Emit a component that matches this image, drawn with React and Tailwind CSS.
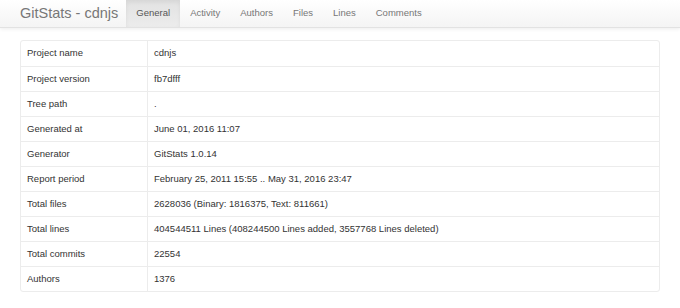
const tabs = ["General", "Activity", "Authors", "Files", "Lines", "Comments"];

const rows = [
  ["Project name", "cdnjs"],
  ["Project version", "fb7dfff"],
  ["Tree path", "."],
  ["Generated at", "June 01, 2016 11:07"],
  ["Generator", "GitStats 1.0.14"],
  ["Report period", "February 25, 2011 15:55 .. May 31, 2016 23:47"],
  ["Total files", "2628036 (Binary: 1816375, Text: 811661)"],
  ["Total lines", "404544511 Lines (408244500 Lines added, 3557768 Lines deleted)"],
  ["Total commits", "22554"],
  ["Authors", "1376"],
];

export default function App() {
  return (
    <div className="w-[680px] h-[308px] bg-white font-['Liberation_Sans',Arial,sans-serif] text-[#333] overflow-hidden">
      {/* Navbar */}
      <nav className="h-[28px] flex items-stretch bg-gradient-to-b from-white to-[#f4f4f4] border-b border-[#e2e2e2] shadow-[0_1px_4px_rgba(0,0,0,0.08)]">
        <span className="ml-[20px] mr-[8px] self-center text-[14.5px] text-[#777] leading-none">
          GitStats - cdnjs
        </span>
        {tabs.map((t, i) => (
          <span
            key={t}
            className={
              i === 0
                ? "px-[10px] flex items-center text-[9.5px] text-[#555] bg-gradient-to-b from-[#e2e2e2] to-[#ececec] shadow-[inset_0_2px_4px_rgba(0,0,0,0.06)]"
                : "px-[10px] flex items-center text-[9.5px] text-[#777]"
            }
          >
            {t}
          </span>
        ))}
      </nav>

      {/* Table */}
      <div className="mx-[20px] mt-[12px] border border-[#ececec] rounded-[3px]">
        {rows.map(([k, v], i) => (
          <div
            key={k}
            className={
              i === 0
                ? "flex h-[25px] text-[9.5px]"
                : "flex h-[25px] text-[9.5px] border-t border-[#ececec]"
            }
          >
            <div className="w-[127px] pl-[6px] flex items-center border-r border-[#ececec]">{k}</div>
            <div className="flex-1 pl-[6px] flex items-center">{v}</div>
          </div>
        ))}
      </div>
    </div>
  );
}
